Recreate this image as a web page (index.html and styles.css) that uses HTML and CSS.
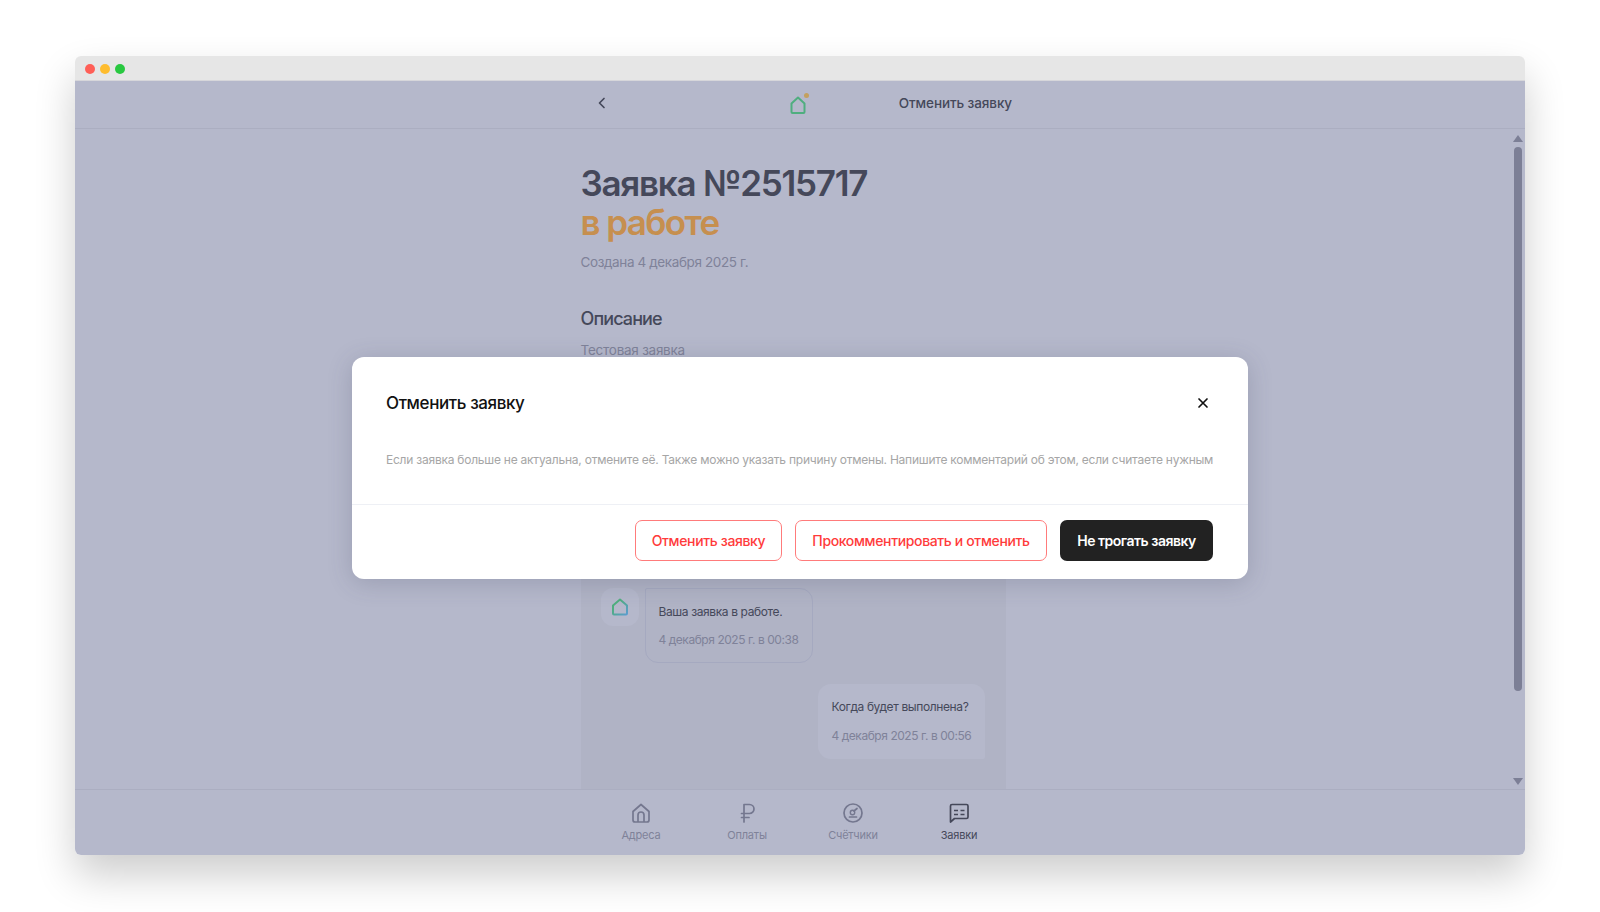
FILE: index.html
```html
<!DOCTYPE html>
<html lang="ru">
<head>
    <meta charset="UTF-8">
    <meta name="viewport" content="width=device-width, initial-scale=1.0">
    <title>Отменить заявку</title>
    <link rel="stylesheet" href="styles.css">
</head>
<body>
    <div class="window">
        <div class="titlebar">
            <span class="dot dot-red"></span>
            <span class="dot dot-yellow"></span>
            <span class="dot dot-green"></span>
        </div>

        <div class="app">
            <header class="top">
                <div class="top-inner">
                    <svg class="back" width="16" height="16" viewBox="0 0 16 16" fill="none">
                        <path d="M10 3.5 5.5 8l4.500 4.500" stroke="#45485a" stroke-width="1.700" stroke-linecap="round" stroke-linejoin="round"/>
                    </svg>
                    <svg class="logo" width="24" height="24" viewBox="0 0 24 24" fill="none">
                        <path d="M4.500 11.500 11 5.500l6.500 6v8.500a1 1 0 0 1-1 1h-11a1 1 0 0 1-1-1z" stroke="#4fae7f" stroke-width="2" stroke-linejoin="round"/>
                        <circle cx="19.500" cy="3.500" r="2.500" fill="#c4a05f"/>
                    </svg>
                    <span class="top-action">Отменить заявку</span>
                </div>
            </header>

            <div class="middle">
                <main class="content">
                    <div class="column">
                        <h1 class="title">Заявка №2515717</h1>
                        <div class="status">в работе</div>
                        <p class="created">Создана 4 декабря 2025 г.</p>
                        <h2 class="section-title">Описание</h2>
                        <p class="section-text">Тестовая заявка</p>

                        <section class="chat">
                            <div class="msg">
                                <div class="avatar">
                                    <svg width="20" height="20" viewBox="0 0 20 20" fill="none">
                                        <defs>
                                            <linearGradient id="homeGrad" x1="0" y1="0" x2="1" y2="1">
                                                <stop offset="0.300" stop-color="#4fae7f"/>
                                                <stop offset="1" stop-color="#5b9ccf"/>
                                            </linearGradient>
                                        </defs>
                                        <path d="M3 8.500 10 2.500l7 6v8a1 1 0 0 1-1 1H4a1 1 0 0 1-1-1z" stroke="url(#homeGrad)" stroke-width="2" stroke-linejoin="round"/>
                                    </svg>
                                </div>
                                <div class="bubble bubble-in">
                                    <div class="bubble-text">Ваша заявка в работе.</div>
                                    <div class="bubble-date">4 декабря 2025 г. в 00:38</div>
                                </div>
                            </div>
                            <div class="msg msg-out">
                                <div class="bubble bubble-out">
                                    <div class="bubble-text">Когда будет выполнена?</div>
                                    <div class="bubble-date">4 декабря 2025 г. в 00:56</div>
                                </div>
                            </div>
                        </section>
                    </div>
                </main>

                <div class="scrollbar">
                    <span class="arrow arrow-up"></span>
                    <span class="thumb"></span>
                    <span class="arrow arrow-down"></span>
                </div>
            </div>

            <nav class="tabs">
                <a class="tab">
                    <svg width="24" height="24" viewBox="0 0 24 24" fill="none" stroke="#74778f" stroke-width="1.700" stroke-linejoin="round">
                        <path d="M4 10.500 12 3.500l8 7V19a2 2 0 0 1-2 2H6a2 2 0 0 1-2-2z"/>
                        <path d="M9 21v-7a3 3 0 0 1 6 0v7"/>
                    </svg>
                    <span>Адреса</span>
                </a>
                <a class="tab">
                    <svg width="24" height="24" viewBox="0 0 24 24" fill="none" stroke="#74778f" stroke-width="1.700" stroke-linecap="round" stroke-linejoin="round">
                        <path d="M9 21V3.500h5.500a4.500 4.500 0 0 1 0 9H6.500"/>
                        <path d="M6.500 16.500H14"/>
                    </svg>
                    <span>Оплаты</span>
                </a>
                <a class="tab">
                    <svg width="24" height="24" viewBox="0 0 24 24" fill="none" stroke="#74778f" stroke-width="1.700" stroke-linecap="round">
                        <circle cx="12" cy="12" r="9"/>
                        <circle cx="11.500" cy="11.500" r="2.200" stroke-width="1.400"/>
                        <path d="M13 10l3-2.500M8.500 16h7"/>
                    </svg>
                    <span>Счётчики</span>
                </a>
                <a class="tab tab-active">
                    <svg width="24" height="24" viewBox="0 0 24 24" fill="none" stroke="#45485a" stroke-width="1.700" stroke-linejoin="round">
                        <path d="M5 3.500h14.500a1.500 1.500 0 0 1 1.500 1.500v11a1.500 1.500 0 0 1-1.500 1.500H7.500L3.500 21V5A1.500 1.500 0 0 1 5 3.500z"/>
                        <path d="M7 9.500h4M13.500 9.500h4M7 13.500h4M13.500 13.500h4" stroke-width="1.500"/>
                    </svg>
                    <span>Заявки</span>
                </a>
            </nav>

            <div class="overlay">
                <div class="modal">
                    <div class="modal-head">
                        <h3 class="modal-title">Отменить заявку</h3>
                        <svg class="modal-close" width="12" height="12" viewBox="0 0 12 12" fill="none">
                            <path d="M2 2l8 8M10 2l-8 8" stroke="#111" stroke-width="1.700" stroke-linecap="round"/>
                        </svg>
                    </div>
                    <p class="modal-text">Если заявка больше не актуальна, отмените её. Также можно указать причину отмены. Напишите комментарий об этом, если считаете нужным</p>
                    <div class="modal-foot">
                        <button class="btn btn-outline">Отменить заявку</button>
                        <button class="btn btn-outline btn-wide">Прокомментировать и отменить</button>
                        <button class="btn btn-dark">Не трогать заявку</button>
                    </div>
                </div>
            </div>
        </div>
    </div>
</body>
</html>
```

FILE: styles.css
```css
* {
    box-sizing: border-box;
}

html, body {
    height: 100%;
}

body {
    margin: 0;
    padding: 56px 75px 57px;
    background-color: #fff;
    font-family: Inter, "Noto Sans", sans-serif;
    overflow: hidden;
}

.window {
    display: flex;
    flex-direction: column;
    height: 799px;
    border-radius: 6px;
    overflow: hidden;
    box-shadow: 0 20px 40px rgba(0, 0, 0, 0.2);
}

.titlebar {
    display: flex;
    align-items: center;
    gap: 5px;
    height: 25px;
    padding: 2px 0 0 10px;
    background-color: #e6e6e6;
    border-bottom: 1px solid #d6d6da;
    flex-shrink: 0;
}

.dot {
    width: 10px;
    height: 10px;
    border-radius: 50%;
}

.dot-red { background-color: #ff5f57; }
.dot-yellow { background-color: #febc2e; }
.dot-green { background-color: #28c840; }

.app {
    position: relative;
    flex: 1;
    display: flex;
    flex-direction: column;
    min-height: 0;
    background-color: #b5b8cb;
}

.top {
    height: 48px;
    flex-shrink: 0;
    border-bottom: 1px solid #abaec1;
}

.top-inner {
    display: grid;
    grid-template-columns: 1fr auto 1fr;
    align-items: center;
    width: 424px;
    height: 100%;
    margin: 0 auto;
    padding-left: 6px;
}

.back {
    margin-top: -4px;
}

.logo {
    margin: -2px 8px 0 0;
}

.top-action {
    justify-self: end;
    font-size: 13.500px;
    font-weight: 500;
    color: #45485a;
    letter-spacing: -0.1px;
    margin-top: -3px;
}

.middle {
    flex: 1;
    display: flex;
    min-height: 0;
}

.content {
    flex: 1;
    display: flex;
    justify-content: center;
    min-height: 0;
}

.column {
    width: 425px;
    display: flex;
    flex-direction: column;
    padding-top: 35px;
}

.title {
    margin: 0;
    font-size: 35px;
    line-height: 39px;
    font-weight: 600;
    color: #45485a;
    letter-spacing: -1.250px;
}

.status {
    font-size: 35px;
    line-height: 39px;
    font-weight: 600;
    color: #c68f4f;
    letter-spacing: -1.600px;
}

.created {
    margin: 10px 0 0;
    font-size: 13.500px;
    line-height: 20px;
    color: #7f8299;
    letter-spacing: -0.38px;
}

.section-title {
    margin: 35px 0 0;
    font-size: 18px;
    line-height: 24px;
    font-weight: 500;
    color: #45485a;
    letter-spacing: -0.9px;
}

.section-text {
    margin: 9px 0 0;
    font-size: 13.500px;
    line-height: 20px;
    color: #7f8299;
    letter-spacing: -0.25px;
}

.chat {
    flex: 1;
    display: flex;
    flex-direction: column;
    justify-content: flex-end;
    gap: 21px;
    margin-top: 20px;
    padding: 0 21px 30px 20px;
    background-color: #b0b3c5;
}

.msg {
    display: flex;
    gap: 6px;
}

.msg-out {
    justify-content: flex-end;
}

.avatar {
    display: flex;
    align-items: center;
    justify-content: center;
    width: 38px;
    height: 38px;
    border-radius: 12px;
    background-color: #b5b8cb;
}

.bubble {
    width: 167px;
    height: 75px;
    padding: 14px 0 0 14px;
    border-radius: 13px;
}

.bubble-in {
    width: 168px;
    border: 1px solid #a5a9c0;
    border-top-left-radius: 2px;
    padding: 14px 0 0 13px;
}

.bubble-out {
    background-color: #b5b8cb;
    border-bottom-right-radius: 2px;
}

.bubble-text {
    font-size: 12px;
    line-height: 18px;
    color: #45485a;
    letter-spacing: -0.38px;
}

.bubble-date {
    margin-top: 11px;
    font-size: 12px;
    line-height: 18px;
    color: #7f8299;
    letter-spacing: -0.45px;
    white-space: nowrap;
}

.bubble-in .bubble-date {
    margin-top: 10px;
}

.scrollbar {
    width: 13px;
    display: flex;
    flex-direction: column;
    align-items: center;
    padding: 6px 0 4px;
    margin-right: 1px;
    flex-shrink: 0;
}

.thumb {
    flex: 1;
    width: 8px;
    margin: 5px 0 87px;
    border-radius: 4px;
    background-color: #7c7f96;
}

.arrow {
    width: 0;
    height: 0;
    border-left: 5px solid transparent;
    border-right: 5px solid transparent;
}

.arrow-up {
    border-bottom: 7px solid #7c7f96;
}

.arrow-down {
    border-top: 7px solid #7c7f96;
}

.tabs {
    display: flex;
    justify-content: center;
    height: 66px;
    flex-shrink: 0;
    padding-top: 11px;
    border-top: 1px solid #abaec1;
}

.tab {
    width: 106px;
    display: flex;
    flex-direction: column;
    align-items: center;
    gap: 3px;
    font-size: 11px;
    line-height: 14px;
    color: #7f8299;
    letter-spacing: -0.2px;
}

.tab-active {
    color: #45485a;
}

.overlay {
    position: absolute;
    inset: 0;
    display: flex;
    align-items: center;
    justify-content: center;
}

.modal {
    width: 896px;
    height: 222px;
    border-radius: 12px;
    background-color: #fff;
    box-shadow: 0 4px 24px rgba(60, 63, 90, 0.22);
}

.modal-head {
    display: flex;
    align-items: center;
    justify-content: space-between;
    height: 91px;
    padding: 0 39px 0 34px;
}

.modal-title {
    margin: 0;
    font-size: 17px;
    font-weight: 500;
    color: #111;
    letter-spacing: -0.4px;
}

.modal-text {
    margin: 0;
    height: 56px;
    padding: 0 34px;
    font-size: 12px;
    line-height: 23px;
    color: #a6a6a6;
    white-space: nowrap;
    letter-spacing: -0.235px;
}

.modal-foot {
    display: flex;
    justify-content: flex-end;
    gap: 13px;
    padding: 15px 35px 0;
    border-top: 1px solid #eef0f5;
}

.btn {
    height: 41px;
    padding: 0;
    border-radius: 7px;
    font-family: inherit;
    font-size: 14px;
    font-weight: 500;
    letter-spacing: -0.36px;
    cursor: pointer;
}

.btn-outline {
    width: 147px;
    background-color: #fff;
    border: 1px solid #ff7b7b;
    color: #ff3b3b;
}

.btn-wide {
    width: 252px;
}

.btn-dark {
    width: 153px;
    background-color: #222;
    border: none;
    color: #fff;
    font-weight: 600;
    letter-spacing: -0.5px;
}
```
